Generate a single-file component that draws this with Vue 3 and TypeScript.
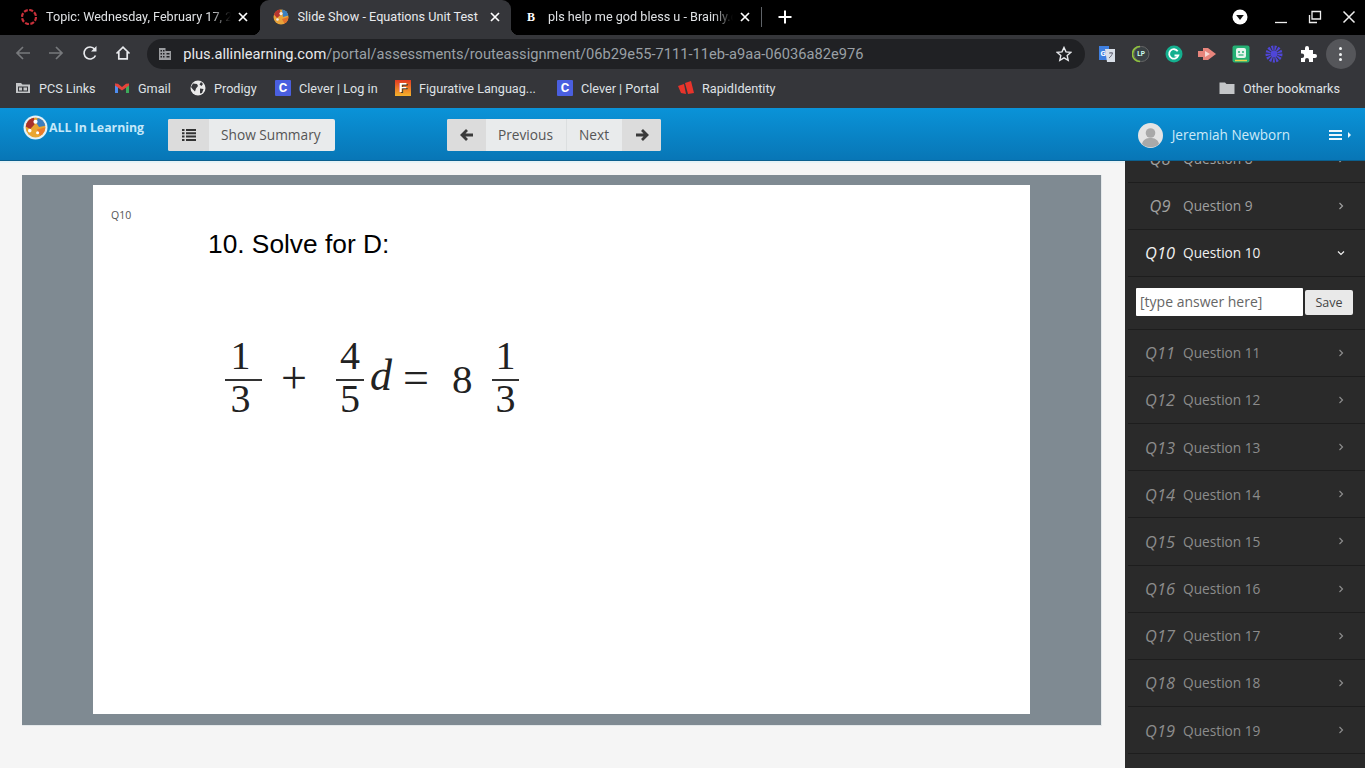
<script setup lang="ts">
interface Bookmark { label: string; kind: string; width: number }
const bookmarks: Bookmark[] = [
  { label: 'PCS Links', kind: 'folder', width: 99 },
  { label: 'Gmail', kind: 'gmail', width: 76 },
  { label: 'Prodigy', kind: 'globe', width: 85 },
  { label: 'Clever | Log in', kind: 'clever', width: 120 },
  { label: 'Figurative Languag...', kind: 'fig', width: 162 },
  { label: 'Clever | Portal', kind: 'clever', width: 121 },
  { label: 'RapidIdentity', kind: 'rapid', width: 110 }
]
const before = [8, 9]
const after = [11, 12, 13, 14, 15, 16, 17, 18, 19, 20]
</script>

<template>
  <div class="page">
    <div class="tabstrip">
      <div class="tab">
        <svg class="fav" viewBox="0 0 16 16"><circle cx="8" cy="8" r="7" fill="none" stroke="#c9303a" stroke-width="2.200" stroke-dasharray="4 1.500" /></svg>
        <span class="tabtitle">Topic: Wednesday, February 17, 2021</span>
        <svg class="tabx" viewBox="0 0 10 10"><path d="M1 1l8 8M9 1l-8 8" stroke="#fff" stroke-width="1.700" /></svg>
      </div>
      <div class="tab active">
        <svg class="fav" viewBox="0 0 16 16"><circle cx="8" cy="8" r="7.500" fill="#e8a33a" /><path d="M9 .6a7.500 7.500 0 0 1 6.400 6L10 8z" fill="#3b7fc0" /><path d="M1 5.500A7.500 7.500 0 0 1 7 .6L7.500 6 4 9z" fill="#b5352f" /><path d="M15.400 8a7.500 7.500 0 0 1-4 6.600L9 10z" fill="#e2702c" /><circle cx="8" cy="4.600" r="1.600" fill="#eee" /><circle cx="4.500" cy="10.500" r="1.300" fill="#eee" /></svg>
        <span class="tabtitle full">Slide Show - Equations Unit Test</span>
        <svg class="tabx" viewBox="0 0 10 10"><path d="M1 1l8 8M9 1l-8 8" stroke="#fff" stroke-width="1.700" /></svg>
      </div>
      <div class="tab third">
        <span class="fav brainly">B</span>
        <span class="tabtitle">pls help me god bless u - Brainly.com</span>
        <svg class="tabx" viewBox="0 0 10 10"><path d="M1 1l8 8M9 1l-8 8" stroke="#fff" stroke-width="1.700" /></svg>
      </div>
      <span class="tabsep"></span>
      <svg class="newtab" viewBox="0 0 14 14"><path d="M7 .5v13M.5 7h13" stroke="#fff" stroke-width="2" /></svg>
      <div class="wincontrols">
        <svg class="wc-drop" viewBox="0 0 16 16"><circle cx="8" cy="8" r="7.500" fill="#fff" /><path d="M4.200 6h7.600L8 11z" fill="#111" /></svg>
        <svg class="wc" viewBox="0 0 14 14"><path d="M1 12.500h12" stroke="#eee" stroke-width="1.300" /></svg>
        <svg class="wc" viewBox="0 0 14 14"><path d="M4 1.500h8.500v7.500H4zM1.500 5v7.500H9" fill="none" stroke="#eee" stroke-width="1.300" /></svg>
        <svg class="wc" viewBox="0 0 14 14"><path d="M1.500 1.500l11 11M12.500 1.500l-11 11" stroke="#eee" stroke-width="1.500" /></svg>
      </div>
    </div>

    <div class="toolbar">
      <svg class="nav first" viewBox="0 0 16 16"><path d="M15 8H2M8 2L2 8l6 6" fill="none" stroke="#77797c" stroke-width="1.700" /></svg>
      <svg class="nav" viewBox="0 0 16 16"><path d="M1 8h13M8 2l6 6-6 6" fill="none" stroke="#77797c" stroke-width="1.700" /></svg>
      <svg class="nav" viewBox="0 0 16 16"><path d="M13.500 10.500A6 6 0 1 1 12.700 4.200" fill="none" stroke="#e8eaed" stroke-width="1.700" /><path d="M14.500 1v5.500H9z" fill="#e8eaed" /></svg>
      <svg class="nav" viewBox="0 0 16 16"><path d="M1.500 8.500L8 2.200l6.500 6.300M3.800 7v6.800h8.400V7" fill="none" stroke="#e8eaed" stroke-width="1.700" /></svg>
      <div class="omnibox">
        <svg class="site" viewBox="0 0 14 14"><path d="M1 1h6.500v3H13v9H1z" fill="#9a9c9f" /><path d="M2.500 3h1.500v1.500H2.500zM5 3h1.500v1.500H5zM2.500 6h1.500v1.500H2.500zM5 6h1.500v1.500H5zM2.500 9h1.500v1.500H2.500zM5 9h1.500v1.500H5zM8.500 6h3v1.500h-3zM8.500 9h3v1.500h-3z" fill="#202124" /></svg>
        <span class="url"><b>plus.allinlearning.com</b>/portal/assessments/routeassignment/06b29e55-7111-11eb-a9aa-06036a82e976</span>
        <svg class="star" viewBox="0 0 16 16"><path d="M8 1.500l2 4.400 4.800.5-3.600 3.200 1 4.700L8 11.900l-4.200 2.400 1-4.700L1.200 6.400 6 5.900z" fill="none" stroke="#e8eaed" stroke-width="1.400" /></svg>
      </div>
      <div class="exts">
        <svg class="ext" viewBox="0 0 18 18"><path d="M1 1h10v14H1z" fill="#3f7fe0" /><path d="M7 4h10v13H9z" fill="#d9dfe8" /><text x="2.500" y="11" class="gt">G</text><path d="M11 8h4M13 7v1M14.500 8c-.5 2-2 4-3.500 5" fill="none" stroke="#667" stroke-width="1" /></svg>
        <svg class="ext" viewBox="0 0 18 18"><circle cx="9.500" cy="9" r="7.500" fill="#3a4144" stroke="#666" /><path d="M8 1.500A7.500 7.500 0 0 0 8 16.500" fill="none" stroke="#8fc33f" stroke-width="1.700" /><text x="5.300" y="11.400" class="lp">LP</text></svg>
        <svg class="ext" viewBox="0 0 18 18"><circle cx="9" cy="9" r="8.500" fill="#14b08f" /><path d="M12.700 6.200A4.700 4.700 0 1 0 13.300 10.500H9.500" fill="none" stroke="#fff" stroke-width="1.800" /></svg>
        <svg class="ext" viewBox="0 0 18 18"><path d="M0 6h5V3h5l8 6-8 6h-5v-3H0z" fill="#e8857c" /><path d="M7 6l5 3-5 3z" fill="#f5d8d4" /></svg>
        <svg class="ext" viewBox="0 0 18 18"><rect x=".5" y=".5" width="17" height="17" rx="2" fill="#25b074" /><rect x="4" y="3" width="10" height="10" rx="2" fill="#e5f5ed" /><circle cx="7" cy="7" r="1" fill="#25b074" /><circle cx="11" cy="7" r="1" fill="#25b074" /><path d="M6.500 10h5" stroke="#25b074" stroke-width="1.200" /><path d="M3 15.500h12" stroke="#e6d64c" stroke-width="1.500" /></svg>
        <svg class="ext" viewBox="0 0 18 18"><circle cx="9" cy="9" r="6" fill="none" stroke="#4f46d8" stroke-width="5" stroke-dasharray="1.800 1" /><circle cx="9" cy="9" r="3.400" fill="#4f46d8" /></svg>
        <svg class="ext" viewBox="0 0 18 18"><path d="M2 5h4V3a2 2 0 0 1 4 0v2h4v4h2a2 2 0 0 1 0 4h-2v4H10v-2a2 2 0 0 0-4 0v2H2v-4h1a2.200 2.200 0 0 0 0-4.400H2z" fill="#fff" /></svg>
      </div>
      <div class="menu"><i></i><i></i><i></i></div>
    </div>

    <div class="bookmarks">
      <div v-for="b in bookmarks" :key="b.label" class="bm" :style="{ width: b.width + 'px' }">
        <svg v-if="b.kind === 'folder'" class="bmi" viewBox="0 0 16 16"><path d="M1 3h5l1.500 1.500H15V13H1z" fill="#c4c6c8" /><rect x="3" y="6.500" width="10" height="5" fill="#35363a" /><rect x="4" y="7.500" width="3" height="3" fill="#c4c6c8" /><rect x="8.500" y="7.500" width="3.500" height="3" fill="#c4c6c8" /></svg>
        <svg v-else-if="b.kind === 'gmail'" class="bmi" viewBox="0 0 16 16"><path d="M1 3.500v9.500h3V6.500z" fill="#4f8ef0" /><path d="M15 3.500v9.500h-3V6.500z" fill="#3cab5a" /><path d="M1 3.500l3 .2 4 3.300 4-3.300 3-.2v2L8 10.500 1 5.500z" fill="#e5433a" /></svg>
        <svg v-else-if="b.kind === 'globe'" class="bmi" viewBox="0 0 16 16"><circle cx="8" cy="8" r="7.500" fill="#eaeaea" /><path d="M3 3.500l4 .5 1 2-2 2.500-1 3L2.500 9 1 7zM11 2l2 2-1.500 2L9.500 4.500zM10 8.500l3.500.5-1.500 4-2 .5z" fill="#35363a" /></svg>
        <span v-else-if="b.kind === 'clever'" class="clever">C</span>
        <span v-else-if="b.kind === 'fig'" class="fig">F</span>
        <svg v-else class="bmi" viewBox="0 0 16 16"><path d="M0 6l6-2 2 10-5-1zM7 3l6-2 3 12-6 1z" fill="#e8342b" /></svg>
        <span class="bmt">{{ b.label }}</span>
      </div>
      <div class="other">
        <svg class="bmi" viewBox="0 0 16 16"><path d="M.5 2.500h5.500l1.500 1.500H15.500v10H.5z" fill="#c4c6c8" /></svg>
        <span class="bmt">Other bookmarks</span>
      </div>
    </div>

    <header class="appbar">
      <div class="logo">
        <svg class="logoi" viewBox="0 0 24 24"><circle cx="12" cy="12" r="11.500" fill="#e4f1f8" /><circle cx="12" cy="12" r="9.500" fill="#e9a531" /><path d="M3.500 8a9.500 9.500 0 0 1 7-5.400L11 9l-4 4.500L2.600 11z" fill="#a8302c" /><path d="M14 2.800a9.500 9.500 0 0 1 7.400 7.500l-6 1.200L13 8z" fill="#3c7ebf" /><path d="M21.400 12a9.500 9.500 0 0 1-5 8l-3-6z" fill="#ea7a2c" /><circle cx="12" cy="6.500" r="2" fill="#fff" /><circle cx="6.500" cy="15" r="1.700" fill="#fff" /><circle cx="14" cy="17" r="1.500" fill="#fff" /></svg>
        <span>ALL In Learning</span>
      </div>
      <div class="btn summary"><span class="ico">
        <svg viewBox="0 0 14 12" class="list"><path d="M0 1h2.500M0 4.300h2.500M0 7.600h2.500M0 11h2.500M4 1h10M4 4.300h10M4 7.600h10M4 11h10" stroke="#333" stroke-width="2" /></svg>
      </span><span class="lbl">Show Summary</span></div>
      <div class="btn pager">
        <span class="ico arrow"><svg viewBox="0 0 14 12" class="arr"><path d="M13 6H3M7 1L2 6l5 5" fill="none" stroke="#3a3a3a" stroke-width="2.800" /></svg></span>
        <span class="lbl prev">Previous</span>
        <span class="lbl next">Next</span>
        <span class="ico arrow"><svg viewBox="0 0 14 12" class="arr"><path d="M1 6h10M7 1l5 5-5 5" fill="none" stroke="#3a3a3a" stroke-width="2.800" /></svg></span>
      </div>
      <div class="user">
        <svg class="avatar" viewBox="0 0 25 25"><circle cx="12.500" cy="12.500" r="12.500" fill="#e4e4e4" /><circle cx="12.500" cy="10" r="4.800" fill="#a9a9a9" /><path d="M4 21c1-5 5-6 8.500-6s7.500 1 8.500 6a12.500 12.500 0 0 1-17 0z" fill="#a9a9a9" /></svg>
        <span class="uname">Jeremiah Newborn</span>
        <span class="burger"><i></i><i></i><i></i></span>
        <span class="caret"></span>
      </div>
    </header>

    <div class="body">
      <main class="stage">
        <div class="slideframe">
          <div class="slide">
            <div class="qtag">Q10</div>
            <div class="slidebody">
              <h1 class="qtitle">10. Solve for D:</h1>
              <div class="math">
                <span class="frac f1"><span>1</span><span>3</span></span>
                <span class="plus">+</span>
                <span class="frac f2"><span>4</span><span>5</span></span>
                <span class="var">d</span>
                <span class="eq">=</span>
                <span class="whole">8</span>
                <span class="frac f3"><span>1</span><span>3</span></span>
              </div>
            </div>
          </div>
        </div>
      </main>
      <aside class="side">
        <div class="rows">
          <div v-for="n in before" :key="n" class="row">
            <span class="qn">Q{{ n }}</span><span class="qt">Question {{ n }}</span>
            <svg class="chev" viewBox="0 0 6 8"><path d="M1.500 1l3 3-3 3" fill="none" stroke="currentColor" stroke-width="1.200" /></svg>
          </div>
          <div class="row on">
            <span class="qn">Q10</span><span class="qt">Question 10</span>
            <svg class="chev down" viewBox="0 0 8 6"><path d="M1 1.500l3 3 3-3" fill="none" stroke="currentColor" stroke-width="1.200" /></svg>
          </div>
          <div class="answer">
            <input class="ans" placeholder="[type answer here]" />
            <button class="save">Save</button>
          </div>
          <div v-for="n in after" :key="n" class="row dim">
            <span class="qn">Q{{ n }}</span><span class="qt">Question {{ n }}</span>
            <svg class="chev" viewBox="0 0 6 8"><path d="M1.500 1l3 3-3 3" fill="none" stroke="currentColor" stroke-width="1.200" /></svg>
          </div>
        </div>
      </aside>
    </div>
  </div>
</template>

<style>
html, body { margin: 0; overflow: hidden; background: #f5f5f5; }
</style>

<style scoped>
.page { width: 1365px; height: 768px; overflow: hidden; display: flex; flex-direction: column; font-family: Roboto, "Liberation Sans", sans-serif; }

.tabstrip { height: 35px; flex: none; background: #000; display: flex; align-items: stretch; padding-left: 8px; box-sizing: border-box; }
.tab { width: 251.500px; flex: none; box-sizing: border-box; display: flex; align-items: center; padding: 0 0 2px 13px; color: #dfe1e4; font-size: 12.650px; position: relative; }
.tab.third { padding-left: 12px; }
.tab.active { background: #35363a; border-radius: 9px 9px 0 0; color: #e8eaed; }
.tab.active::before, .tab.active::after { content: ""; position: absolute; bottom: 0; width: 8px; height: 8px; }
.tab.active::before { left: -8px; background: radial-gradient(circle at 0 0, transparent 8px, #35363a 8.500px); }
.tab.active::after { right: -8px; background: radial-gradient(circle at 100% 0, transparent 8px, #35363a 8.500px); }
.fav { width: 16px; height: 16px; flex: none; }
.brainly { font: bold 12px "Liberation Serif", serif; color: #fff; text-align: center; line-height: 16px; }
.tabtitle { margin-left: 9px; width: 185px; white-space: nowrap; overflow: hidden; -webkit-mask-image: linear-gradient(90deg, #000 165px, transparent 185px); mask-image: linear-gradient(90deg, #000 165px, transparent 185px); }
.tabtitle.full { -webkit-mask-image: none; mask-image: none; }
.tabx { width: 10px; height: 10px; margin-left: 7px; flex: none; }
.tabsep { width: 1px; height: 20px; background: #5f6368; align-self: center; margin: 0 0 2px -2px; }
.newtab { width: 14px; height: 14px; align-self: center; margin: 0 0 2px 16px; }
.wincontrols { margin-left: auto; display: flex; align-items: center; padding: 0 9px 2px 0; }
.wc-drop { width: 16px; height: 16px; margin-right: 26px; }
.wc { width: 14px; height: 14px; margin-left: 20px; }
.wc-drop + .wc { margin-left: 0; }

.toolbar { height: 36px; flex: none; background: #35363a; display: flex; align-items: center; }
.nav { width: 16px; height: 16px; margin-right: 17.300px; flex: none; }
.nav.first { margin-left: 15px; }
.omnibox { margin: 2px 0 0 -1px; width: 938px; height: 30px; border-radius: 15px; background: #202124; display: flex; align-items: center; box-sizing: border-box; flex: none; }
.site { width: 14px; height: 14px; margin-left: 11px; flex: none; }
.url { margin-left: 11px; font-size: 14.660px; color: #9aa0a6; white-space: nowrap; }
.url b { font-weight: 400; color: #e8eaed; }
.star { width: 16px; height: 16px; margin-left: auto; margin-right: 13px; }
.exts { display: flex; align-items: center; margin: 2px 0 0 13px; gap: 15.400px; }
.ext { width: 18px; height: 18px; flex: none; }
.gt { font: bold 8px Roboto, sans-serif; fill: #fff; }
.lp { font: bold 6.500px Roboto, sans-serif; fill: #cfe; }
.menu { width: 30px; height: 30px; border-radius: 50%; background: #55565a; margin: 2px 0 0 9px; display: flex; flex-direction: column; align-items: center; justify-content: center; gap: 2.500px; flex: none; }
.menu i { width: 3px; height: 3px; border-radius: 50%; background: #f1f3f4; }

.bookmarks { height: 37px; flex: none; background: #35363a; display: flex; align-items: center; padding: 0 0 3px 15px; box-sizing: border-box; }
.bm { display: flex; align-items: center; flex: none; }
.bmi { width: 16px; height: 16px; flex: none; }
.bmt { margin-left: 8px; font-size: 12.650px; color: #dfe1e5; white-space: nowrap; }
.clever { width: 16px; height: 16px; border-radius: 1px; background: #4a5fe0; color: #fff; font: bold 13px/16px Roboto, sans-serif; text-align: center; flex: none; }
.fig { width: 16px; height: 16px; box-sizing: border-box; background: linear-gradient(#e23a22, #f4b32c); color: #fff; font: 900 13px/16px "Liberation Sans", sans-serif; text-align: center; text-shadow: 1px 1px 0 #333; flex: none; }
.other { margin-left: auto; display: flex; align-items: center; padding-right: 25px; }

.appbar { height: 53px; flex: none; background: linear-gradient(#0a93d8, #0876b6); display: flex; align-items: center; position: relative; z-index: 2; border-bottom: 1px solid #0b5f8e; box-sizing: border-box; padding-top: 2px; }
.logo { width: 168px; flex: none; display: flex; align-items: center; box-sizing: border-box; padding: 0 0 15px 23px; color: #c4e8f9; font: 700 12.300px "Open Sans", sans-serif; white-space: nowrap; }
.logoi { width: 25px; height: 25px; flex: none; margin-right: 1px; }
.btn { height: 32px; border-radius: 2px; background: #e9ebec; display: flex; align-items: center; overflow: hidden; font: 400 13.700px "Open Sans", sans-serif; color: #555; flex: none; }
.summary { width: 167px; }
.ico { width: 41px; height: 100%; background: #dcdcdc; display: flex; align-items: center; justify-content: center; flex: none; }
.list { width: 14px; height: 12px; }
.lbl { white-space: nowrap; line-height: 31px; height: 32px; }
.summary .lbl { margin-left: 12px; }
.pager { width: 214px; margin-left: 112px; }
.arrow { width: 39px; }
.arr { width: 14px; height: 12px; }
.prev { width: 81px; box-sizing: border-box; padding-left: 12px; border-right: 1px solid #dcdfe0; }
.next { width: 55px; box-sizing: border-box; padding-left: 12px; }
.user { display: flex; align-items: center; margin-left: auto; padding-right: 14px; }
.avatar { width: 25px; height: 25px; flex: none; }
.uname { margin: 0 0 1px 9px; font: 400 13.550px "Open Sans", sans-serif; color: #cdeaf8; white-space: nowrap; }
.burger { margin-left: 39px; display: flex; flex-direction: column; gap: 2px; }
.burger i { width: 13px; height: 2px; background: #eef7fb; }
.caret { margin-left: 6px; border-left: 3px solid #eef7fb; border-top: 3px solid transparent; border-bottom: 3px solid transparent; }

.body { flex: 1; min-height: 0; display: flex; }
.stage { width: 1125px; flex: none; background: #f5f5f5; box-sizing: border-box; padding: 14px 0 0 22px; box-shadow: inset 0 2px 0 #e6f2f6; }
.slideframe { width: 1080px; height: 551px; box-sizing: border-box; background: #7f8a92; border-right: 1px solid #e4e8ea; border-bottom: 1px solid #e4e8ea; padding: 10px 71px 10px 71px; }
.slide { width: 937px; height: 529px; background: #fff; display: flex; }
.qtag { font: 400 10.500px "Open Sans", sans-serif; color: #555; margin: 23px 0 0 18px; width: 97px; flex: none; }
.slidebody { display: flex; flex-direction: column; }
.qtitle { margin: 44px 0 0 0; font: 400 26.300px/30px "Liberation Sans", sans-serif; color: #000; }
.math { margin: 78px 0 0 17px; display: flex; align-items: center; font-family: "Liberation Serif", serif; color: #222; height: 80px; }
.frac { display: flex; flex-direction: column; align-items: center; font-size: 40px; line-height: 36px; flex: none; }
.frac span { align-self: stretch; text-align: center; }
.frac span:first-child { border-bottom: 2px solid #333; padding-bottom: 5px; }
.f1 { width: 37px; }
.f1 span { padding-right: 6px; }
.f2 { width: 28px; margin-left: 29px; }
.f3 { width: 27px; margin-left: 19.500px; }
.plus { font-size: 46px; margin-left: 19px; flex: none; }
.var { font-size: 44px; font-style: italic; margin: 0 0 4px 6px; flex: none; }
.eq { font-size: 46px; margin-left: 11px; flex: none; }
.whole { font-size: 41px; margin: 4px 0 0 23px; flex: none; }

.side { flex: 1; min-width: 0; background: #2a2a2a; overflow: hidden; }
.rows { margin-top: -25.500px; }
.row { height: 47.200px; box-sizing: border-box; border-bottom: 1px solid #1d1d1d; display: flex; align-items: center; padding-left: 17px; margin-left: 3px; color: #a0a0a0; }
.row.dim { color: #8c8c8c; }
.row.on { color: #f0f0f0; }
.qn { width: 30px; text-align: center; font: italic 400 16.400px "Open Sans", sans-serif; flex: none; white-space: nowrap; }
.qt { margin-left: 8px; font: 400 13.700px "Open Sans", sans-serif; }
.chev { width: 6px; height: 8px; margin-left: auto; margin-right: 21px; }
.chev.down { width: 8px; height: 6px; margin-right: 20px; }
.answer { height: 52.500px; margin-left: 3px; box-sizing: border-box; border-bottom: 1px solid #1d1d1d; display: flex; align-items: center; padding: 0 0 2px 8px; }
.ans { width: 167px; height: 28px; box-sizing: border-box; border: 0; padding: 0 4px; margin: 0; background: #fff; font: 400 14px "Open Sans", sans-serif; color: #555; border-radius: 1px; }
.ans::placeholder { color: #666; opacity: 1; }
.save { width: 48px; height: 25px; margin-left: 2px; margin-top: 2px; border: 0; padding: 0; background: #e9e9e9; border-radius: 2px; font: 400 12.500px "Open Sans", sans-serif; color: #444; }
</style>
